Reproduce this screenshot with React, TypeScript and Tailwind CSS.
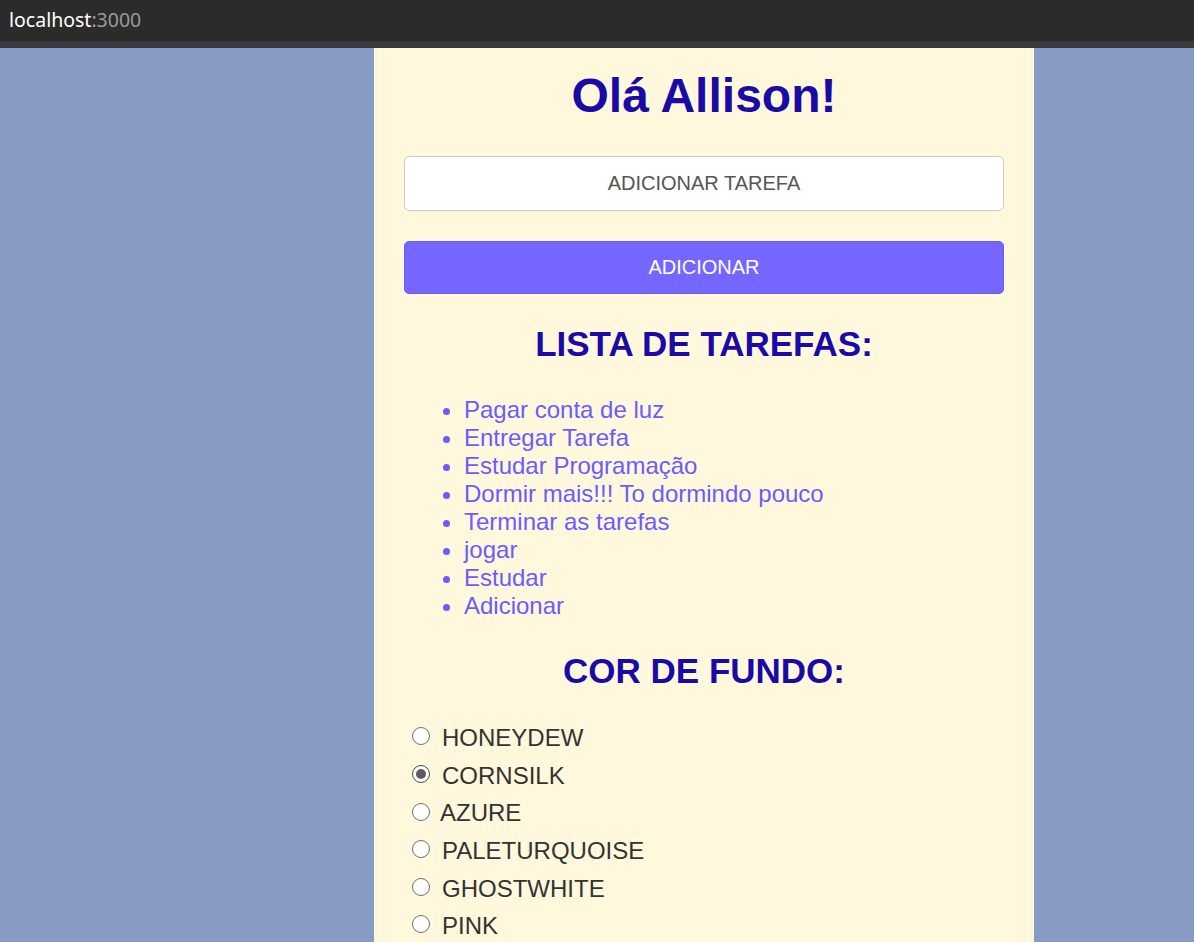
import React from 'react';

const tarefas = [
  'Pagar conta de luz',
  'Entregar Tarefa',
  'Estudar Programação',
  'Dormir mais!!! To dormindo pouco',
  'Terminar as tarefas',
  'jogar',
  'Estudar',
  'Adicionar',
];

const cores = ['HONEYDEW', 'CORNSILK', 'AZURE', 'PALETURQUOISE', 'GHOSTWHITE', 'PINK'];

function Radio({ checked }: { checked: boolean }) {
  return (
    <span
      className={
        'flex h-[18px] w-[18px] shrink-0 items-center justify-center rounded-full border bg-white ' +
        (checked ? 'border-[#4a4a4a]' : 'border-[#6f6f6f]')
      }
    >
      {checked && <span className="h-[10px] w-[10px] rounded-full bg-[#5c5c5c]" />}
    </span>
  );
}

function App() {
  return (
    <div className="flex h-[942px] flex-col overflow-hidden font-['Liberation_Sans',Arial,sans-serif] leading-[1.15]">
      {/* barra do navegador */}
      <div className="flex h-[41px] shrink-0 items-center bg-[#2b2b2b] pl-[9px] font-['Noto_Sans',sans-serif] text-[19.5px]">
        <span className="text-white">localhost</span>
        <span className="text-[#9a9a9a]">:3000</span>
      </div>
      <div className="h-[7px] shrink-0 bg-[#3a3a3a]" />

      <div className="flex flex-1 bg-[#889bc4] pl-[374px]">
        <div className="w-[660px] shrink-0 bg-[#fff8dc] px-[30px]">
          <h1 className="mt-[20px] text-center text-[48px] font-bold text-[#1a0aa6]">Olá Allison!</h1>

          <input
            className="mt-[33px] block h-[55px] w-full rounded-[5px] border border-[#cccccc] bg-white text-center text-[20px] text-[#333] outline-none placeholder:text-[#555]"
            placeholder="ADICIONAR TAREFA"
          />

          <button className="mt-[30px] block h-[53px] w-full rounded-[5px] border border-[#6a5cf0] bg-[#7466ff] text-[20px] text-white">
            ADICIONAR
          </button>

          <h2 className="mt-[30px] text-center text-[35px] font-bold text-[#1a0aa6]">LISTA DE TAREFAS:</h2>

          <ul className="mt-[32px] list-disc pl-[60px] text-[24px] leading-[28px] text-[#6a5cff]">
            {tarefas.map((t) => (
              <li key={t}>{t}</li>
            ))}
          </ul>

          <h2 className="mt-[31px] text-center text-[35px] font-bold text-[#1a0aa6]">COR DE FUNDO:</h2>

          <div className="mt-[26px] flex flex-col">
            {cores.map((c) => (
              <label key={c} className="flex h-[37.6px] items-center pl-[8px] text-[24px] text-[#333]">
                <Radio checked={c === 'CORNSILK'} />
                <span className={c === 'AZURE' ? 'ml-[10px] mt-[3px]' : 'ml-[12px] mt-[3px]'}>{c}</span>
              </label>
            ))}
          </div>
        </div>
      </div>
    </div>
  );
}

export default App;
